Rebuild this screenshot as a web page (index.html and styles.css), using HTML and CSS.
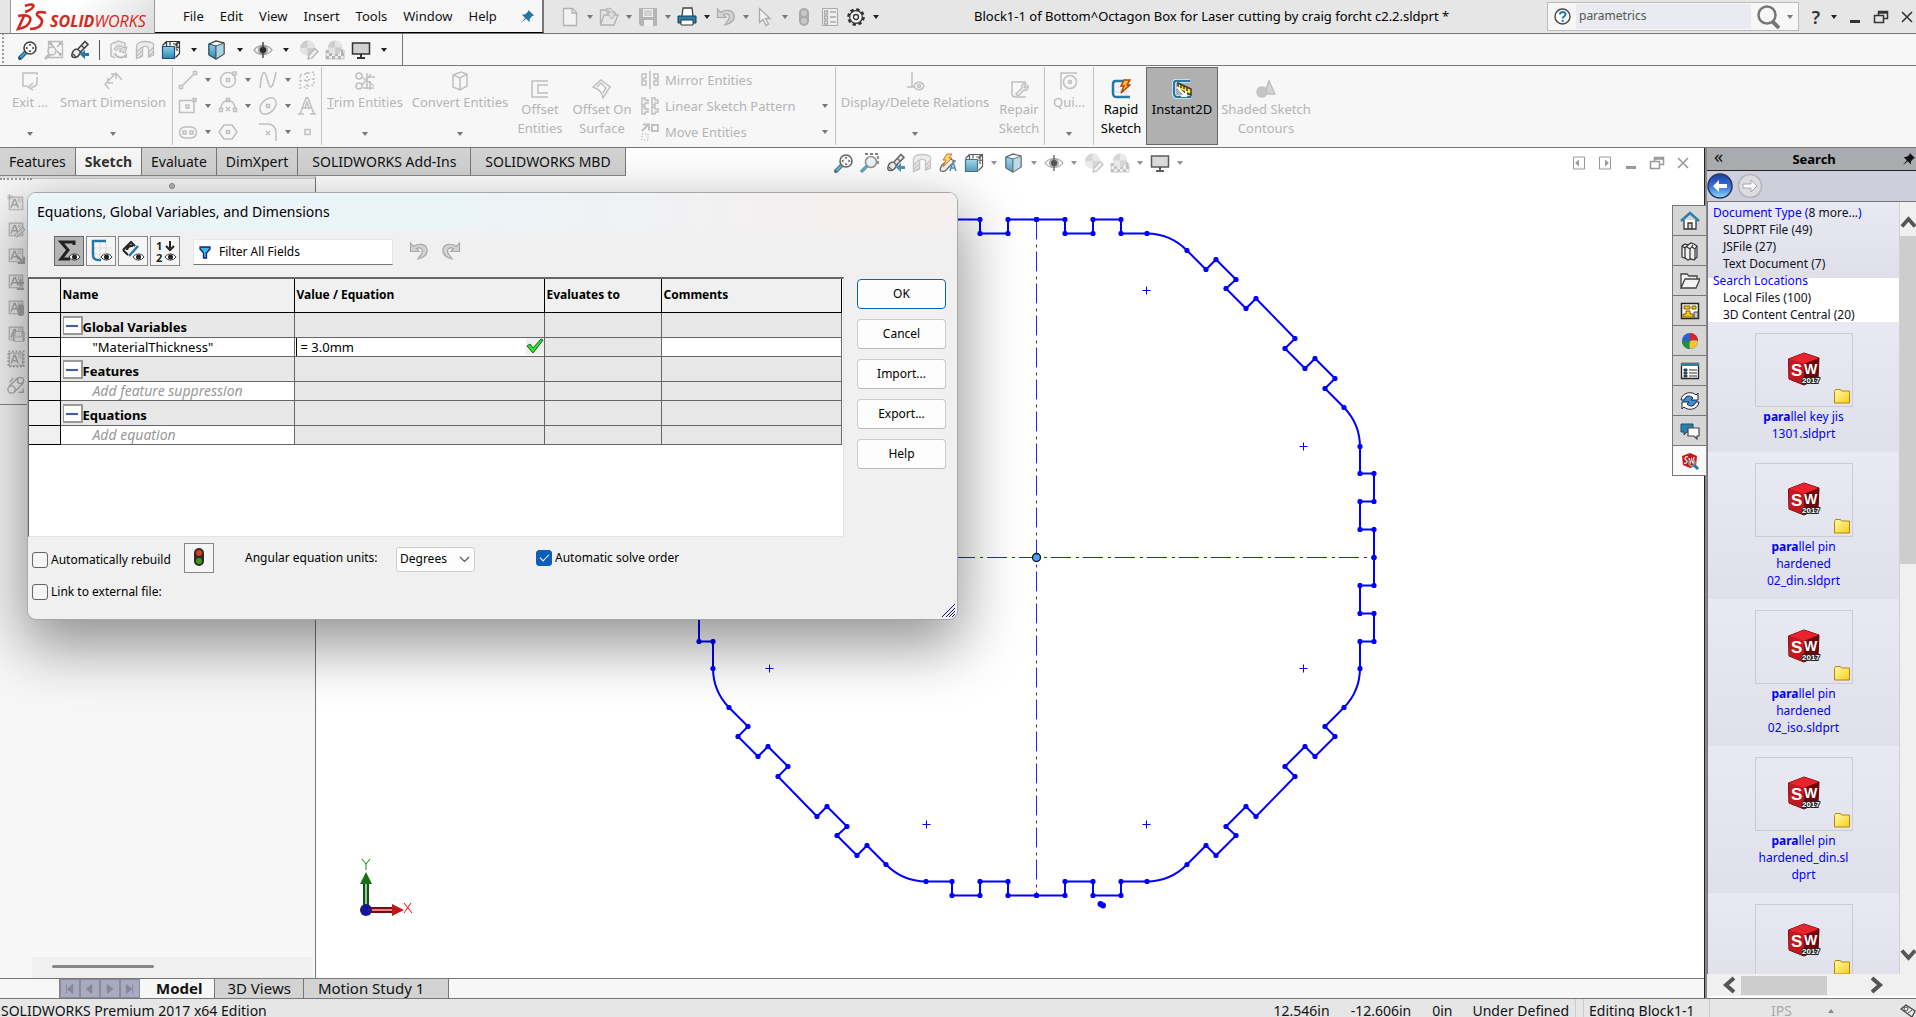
FILE: index.html
```html
<!DOCTYPE html>
<html lang="en">
<head>
<meta charset="utf-8">
<title>SOLIDWORKS - Equations, Global Variables, and Dimensions</title>
<link rel="stylesheet" href="styles.css">
</head>
<body>
<svg class="defs" aria-hidden="true">
  <defs>
    <linearGradient id="blueface" x1="0" y1="0" x2="0" y2="1"><stop offset="0" stop-color="#8fd0ea"/><stop offset="1" stop-color="#2f86b0"/></linearGradient>
    <linearGradient id="orb" x1="0" y1="0" x2="0" y2="1"><stop offset="0" stop-color="#1d3fa0"/><stop offset=".5" stop-color="#3a6fd8"/><stop offset="1" stop-color="#86dcff"/></linearGradient>
    <linearGradient id="fold" x1="0" y1="0" x2="1" y2="1"><stop offset="0" stop-color="#fffbb0"/><stop offset="1" stop-color="#f5cf12"/></linearGradient>
    <marker id="pt" markerUnits="userSpaceOnUse" markerWidth="6" markerHeight="6" refX="3" refY="3"><circle cx="3" cy="3" r="2.6" fill="#00f"/></marker>
  </defs>
  <symbol id="zoomfit" viewBox="0 0 20 20"><path d="M8 12 2 18" stroke="#16577c" stroke-width="4" stroke-linecap="round"/><path d="M7.500 12.500 2.500 17.500" stroke="#4aa3cc" stroke-width="2"/><circle cx="12" cy="8" r="6" fill="#fff" stroke="#444" stroke-width="1.600"/><path d="M12 3.500 13.500 5.500h-3zM12 12.500l1.500-2h-3zM7.500 8 9.500 6.500v3zM16.500 8l-2-1.500v3z" fill="#222"/></symbol>
  <symbol id="zoomarea" viewBox="0 0 20 20"><path d="M5 1h13v12" fill="none" stroke="#333" stroke-width="1.300" stroke-dasharray="3 2"/><path d="M7 13 2 18" stroke="#3f8fb8" stroke-width="3.500" stroke-linecap="round"/><circle cx="11" cy="9" r="5.500" fill="#e8f2f8" stroke="#777" stroke-width="1.500"/></symbol>
  <symbol id="zoomareag" viewBox="0 0 20 20"><path d="M4.500 1.500h14v16h-14z" fill="none" stroke="#bbb" stroke-width="1.300"/><path d="M15 3l2 0v2M17 3l-4 4M8 3H6v2M6 3l4 4M17 15v-2M17 15h-2M17 15l-4-4" fill="none" stroke="#b0b0b0" stroke-width="1.300"/><path d="M6 14 2 18" stroke="#bbb" stroke-width="3" stroke-linecap="round"/><circle cx="8" cy="11" r="4" fill="#f2f2f2" stroke="#bbb" stroke-width="1.500"/></symbol>
  <symbol id="prev" viewBox="0 0 20 20"><path d="M15 1.500 18 4.500 10.500 12c-1 3-3.500 5.500-6 5.500s-3-1.500-2.500-3.500c.5-3 3-5 6-5z" fill="#ececec" stroke="#444" stroke-width="1.600"/><path d="M7.500 9l4 4M11.500 5.500l3 3M3 14l3 3" stroke="#444" stroke-width="1.300"/><path d="M19 13v3h-4v3l-5-4.500 5-4.500v3z" fill="#1f78a8"/></symbol>
  <symbol id="rot" viewBox="0 0 20 20"><path d="M2 4 9 1l7 2v6M2 4v12l4 2" fill="#e9e9e9" stroke="#bbb" stroke-width="1.300"/><path d="M5 9c2-4 8-4 10-1l3-1-2 6-6-2 2.500-1.500C11 8 8 9 7.500 11z" fill="#dcdcdc" stroke="#b5b5b5"/><path d="M6 13c1 5 8 6 11 2v3" fill="none" stroke="#bbb" stroke-width="1.800"/></symbol>
  <symbol id="section" viewBox="0 0 20 20"><path d="M1.500 6c0-3 4-4.500 8.500-4.500S18.500 3 18.500 4v11l-5 2V8c-1-2-5-2-6-.5V16l-6 2.500z" fill="#ececec" stroke="#bbb" stroke-width="1.300"/><path d="M2 12l5-5M2 16l5-5M4 18l4-4M14 12l4-4M14 16l4-4" stroke="#bdbdbd" stroke-width="1.200"/></symbol>
  <symbol id="orient" viewBox="0 0 20 20"><path d="M5.500 1.500h13v12l-4 4M5.500 1.500l-4 4M18.500 1.500l-4 4M9 1.500v4M18.500 7l-4 1M5.500 2v4M12 4h4M16 2v9" fill="none" stroke="#333" stroke-width="1.200"/><path d="M1.500 6.500h12v12h-12z" fill="url(#blueface)" stroke="#1b4f6e" stroke-width="1.200"/></symbol>
  <symbol id="shade" viewBox="0 0 20 20"><path d="M2 4 9 1l8 2v11l-8 5-7-4z" fill="#f5f8fa" stroke="#333" stroke-width="1.200"/><path d="M2 4l7 2v13l-7-4z" fill="url(#blueface)" stroke="#1b4f6e"/><path d="M9 6l8-3v11l-8 5z" fill="#a9d4e6" stroke="#555"/></symbol>
  <symbol id="eye" viewBox="0 0 20 20"><path d="M1 10C5 4 15 4 19 10 15 16 5 16 1 10z" fill="#f2f2f2" stroke="#999" stroke-width="1.200"/><circle cx="10" cy="10" r="5" fill="#999"/><circle cx="10" cy="10" r="3" fill="#222"/><path d="M10 2v16" stroke="#333" stroke-width="1.300"/></symbol>
  <symbol id="ball" viewBox="0 0 20 20"><circle cx="8.500" cy="8" r="7.500" fill="#cdcdcd"/><path d="M8.500 .5a7.500 7.500 0 0 1 7.500 7.500h-7.500zM8.500 8v7.500A7.500 7.500 0 0 1 1 8z" fill="#e4e4e4"/><path d="M9 19l1-4 6-6.500 3 3L13 18z" fill="#f0f0f0" stroke="#b0b0b0" stroke-width="1.200"/></symbol>
  <symbol id="scene" viewBox="0 0 20 20"><path d="M1 10v9h18v-9" fill="#ededed" stroke="#c4c4c4"/><path d="M1 10h3v3H1zM4 13h3v3H4zM7 16h3v3H7zM13 16h3v3h-3zM10 13h3v3h-3zM16 13h3v3h-3zM1 16h3v3H1zM16 9h2v4h-2z" fill="#b5b5b5"/><circle cx="10" cy="7.500" r="7" fill="#cdcdcd"/><path d="M10 .5a7 7 0 0 1 7 7h-7zM10 7.500v7a7 7 0 0 1-7-7z" fill="#e4e4e4"/></symbol>
  <symbol id="monitor" viewBox="0 0 20 20"><path d="M1.500 3h17v11h-17z" fill="#cfd1d3" stroke="#333" stroke-width="1.500"/><path d="M10 14v4M6 18h8" stroke="#333" stroke-width="2"/></symbol>
  <symbol id="bolt" viewBox="0 0 20 20"><path d="M12 6l5 2-8 8c-1 2-4 3-6 2s0-4 1-6z" fill="#eee" stroke="#444" stroke-width="1.300"/><path d="M9 1h5l-3 4h3l-9 9 3-7H5z" fill="#ffd531" stroke="#c0501c"/><path d="M12 18l3-9 3 9M13 15h4" stroke="#2478a6" stroke-width="1.500" fill="none"/></symbol>
  <symbol id="min" viewBox="0 0 16 16"><path d="M3 11h10v3H3z" fill="currentColor"/></symbol>
  <symbol id="restore" viewBox="0 0 16 16"><path d="M5.500 6V2.500h9v7H11M1.500 6.500h9v7h-9zM5.500 4h9" fill="none" stroke="currentColor" stroke-width="1.500"/></symbol>
  <symbol id="close" viewBox="0 0 16 16"><path d="M3 3l10 10M13 3 3 13" stroke="currentColor" stroke-width="1.600"/></symbol>
  <symbol id="pin" viewBox="0 0 16 16"><path d="M9 1l6 6-2 .5-2.500 3L10 14 6.500 10.500 1 15l4.500-5.500L2 6l3.500-.5L8.500 3z" fill="currentColor"/></symbol>
  <symbol id="undo" viewBox="0 0 20 20"><path d="M1.500 2v8.500H10L7.500 7.500C12 5.500 15 9 12.500 12.500L9 18c7-2 10-5 9-10-1.500-5.500-9-6-13.500-2.500z" fill="#d2d2d2" stroke="#a9a9a9" stroke-width="1.200"/></symbol>
  <symbol id="miniEye" viewBox="0 0 12 10"><path d="M.5 5C3 1 9 1 11.500 5 9 9 3 9 .5 5z" fill="#fff" stroke="#333"/><circle cx="6" cy="5" r="2.500" fill="#222"/></symbol>
  <symbol id="abox" viewBox="0 0 20 20"><path d="M2.500 3.500h15v14h-15z" fill="#ececec" stroke="#b9b9b9" stroke-width="1.300"/><path d="M4.500 15 8 6h1l3.500 9M6 12h5" fill="none" stroke="#adadad" stroke-width="1.700"/><circle cx="14" cy="7" r="1.700" fill="none" stroke="#b5b5b5"/></symbol>
  <symbol id="part" viewBox="0 0 34 34"><path d="M1.500 7 17 1l15 5-1 20-14 7-15-6z" fill="#a80d14" stroke="#4d0508"/><path d="M1.500 7 17 1l15 5-15 6z" fill="#e8232b"/><path d="M17 12v21l-15-6-.5-20z" fill="#c4161d"/><path d="M17 12l15-6-1 20-14 7z" fill="#6d070b"/></symbol>
  <symbol id="folder" viewBox="0 0 16 16"><path d="M.5 3.500 1.500 1.500h5l1 1.500h8v12H.5z" fill="url(#fold)" stroke="#b8860b"/></symbol>
  <symbol id="quarter" overflow="visible"><path d="M0-338H28.500V-324H56.500V-338H84.500V-324H110.500A57 57 0 0 1 150.500-307L169.500-288 179.500-298 199.500-278 189.500-269 209.500-249 219.500-259 258.500-219 248.500-209 268.500-189 278.500-199 298.500-179 288.500-169 307.500-150A57 57 0 0 1 323.500-111V-84H337.500V-56H323.500V-28H337.500V0" fill="none" stroke="#00f" stroke-width="2" marker-start="url(#pt)" marker-mid="url(#pt)" marker-end="url(#pt)"/><path d="M106-267h8M110-271v8M263-111h8M267-115v8" stroke="#00f"/></symbol>
</svg>

<header class="titlebar">
  <div class="brand">
    <svg width="32" height="30" viewBox="0 0 32 30" fill="none" stroke="#d9261c" stroke-width="2.600"><path d="M10 4c6-3 10-1 8 1-1 2-5 4-8 5"/><path d="M3 14c8-2 14 0 12 5-1 4-6 7-12 8L9 14"/><path d="M31 11c-5-2-10-1-9 2 1 2 6 3 5 7-1 5-6 7-12 7"/></svg>
    <span class="brand-name"><b>SOLID</b>WORKS</span>
  </div>
  <nav class="menu">
    <button>File</button><button>Edit</button><button>View</button><button>Insert</button><button>Tools</button><button>Window</button><button>Help</button>
    <svg class="menu-pin" width="15" height="15"><use href="#pin"/></svg>
  </nav>
  <div class="quick">
    <button aria-label="New"><svg viewBox="0 0 20 20"><path d="M3.500 1.500h9l4 4v13h-13zM12 2v4h4" fill="#f3f3f3" stroke="#b2b2b2" stroke-width="1.300"/></svg></button><i class="caret"></i>
    <button aria-label="Open"><svg viewBox="0 0 20 20"><path d="M1.500 18V3h5l2 2h7v3M1.500 18 5 8h14l-4 10z" fill="#e6e6e6" stroke="#b2b2b2" stroke-width="1.300"/><path d="M7 2c4-2 7 0 7 4h3l-4 6-5-6h3c0-2-1-3-4-4z" fill="#ddd" stroke="#b5b5b5"/></svg></button><i class="caret"></i>
    <button aria-label="Save"><svg viewBox="0 0 20 20"><path d="M1 1h18v18H3l-2-2z" fill="#b4b4b4"/><path d="M5 2h10v8H5zM6 13h9v6H6z" fill="#eee"/><path d="M6 4h8M6 6h8M6 8h8" stroke="#b4b4b4"/></svg></button><i class="caret"></i>
    <button aria-label="Print"><svg viewBox="0 0 20 20"><path d="M5 9 6 1h9l1 8" fill="#fff" stroke="#444" stroke-width="1.300"/><path d="M1 9h18v7H1z" fill="#2b7fa9" stroke="#143c52"/><path d="M4 13h12v5H4z" fill="#fff" stroke="#333"/></svg></button><i class="caret dark"></i>
    <button aria-label="Undo"><svg><use href="#undo"/></svg></button><i class="caret"></i>
    <button aria-label="Select"><svg viewBox="0 0 20 20"><path d="M4.500 1.500v14l3.500-3 3 6 2.500-1.500-3-5.500H15z" fill="#f2f2f2" stroke="#aaa" stroke-width="1.300"/></svg></button><i class="caret"></i>
    <button aria-label="Rebuild"><svg viewBox="0 0 20 20"><rect x="5" y="1" width="10" height="18" rx="5" fill="#aaa"/><circle cx="10" cy="6" r="3" fill="#c8c8c8"/><circle cx="10" cy="14" r="3" fill="#c8c8c8"/></svg></button>
    <button class="spaced" aria-label="File properties"><svg viewBox="0 0 20 20"><path d="M2.500 1.500h15v17h-15z" fill="#eee" stroke="#aaa"/><path d="M4.500 4h3v3h-3zM4.500 9h3v3h-3zM4.500 14h3v3h-3zM10 5h6M10 10h6M10 15h6" fill="none" stroke="#aaa" stroke-width="1.300"/></svg></button>
    <button class="spaced" aria-label="Options"><svg viewBox="0 0 20 20"><circle cx="10" cy="10" r="7.500" fill="none" stroke="#333" stroke-width="2.600" stroke-dasharray="3.300 2.590"/><circle cx="10" cy="10" r="6.300" fill="#f4f4f4" stroke="#333" stroke-width="1.200"/><circle cx="10" cy="10" r="2.500" fill="none" stroke="#333" stroke-width="1.300"/></svg></button><i class="caret dark"></i>
  </div>
  <span class="doc-title">Block1-1 of Bottom^Octagon Box for Laser cutting by craig forcht c2.2.sldprt *</span>
  <div class="searchbox">
    <svg width="17" height="17" viewBox="0 0 17 17"><circle cx="8.500" cy="8.500" r="7.500" fill="#fff" stroke="#444" stroke-width="1.400"/><path d="M6 6.500c0-3.500 5.500-3.500 5.500 0 0 2-2.800 2-2.800 4M8.700 12v2" fill="none" stroke="#2478a6" stroke-width="2"/></svg>
    <input type="text" value="parametrics" aria-label="Search">
    <svg width="24" height="24" viewBox="0 0 24 24" fill="none" stroke="#777"><circle cx="11" cy="10" r="8.500" stroke-width="2.500"/><path d="M17 17l6 6" stroke-width="4"/></svg>
    <i class="caret"></i>
  </div>
  <div class="win-ctl">
    <button class="helpq">?</button><i class="caret dark"></i>
    <button aria-label="Minimize"><svg><use href="#min"/></svg></button>
    <button aria-label="Restore"><svg><use href="#restore"/></svg></button>
    <button aria-label="Close"><svg><use href="#close"/></svg></button>
  </div>
</header>

<div class="viewbar">
  <div class="viewtools">
    <button aria-label="Zoom to fit"><svg><use href="#zoomfit"/></svg></button>
    <button aria-label="Zoom to area"><svg><use href="#zoomareag"/></svg></button>
    <button class="rule" aria-label="Previous view"><svg><use href="#prev"/></svg></button>
    <button aria-label="Rotate view"><svg><use href="#rot"/></svg></button>
    <button aria-label="Section view"><svg><use href="#section"/></svg></button>
    <button aria-label="View orientation"><svg><use href="#orient"/></svg></button><i class="caret dark"></i>
    <button aria-label="Display style"><svg><use href="#shade"/></svg></button><i class="caret dark"></i>
    <button aria-label="Hide or show items"><svg><use href="#eye"/></svg></button><i class="caret dark"></i>
    <button aria-label="Edit appearance"><svg><use href="#ball"/></svg></button>
    <button aria-label="Apply scene"><svg><use href="#scene"/></svg></button>
    <button aria-label="View settings"><svg><use href="#monitor"/></svg></button><i class="caret dark"></i>
  </div>
</div>

<div class="ribbon">
  <div class="group g-sketch">
    <button class="tool w60"><svg viewBox="0 0 20 20"><path d="M17 4V2H3v13h4M17 6v5c0 3-2 5-6 5M13 12l-5 4 5 3" /></svg>Exit ...<i class="caret"></i></button>
    <button class="tool w106"><svg viewBox="0 0 20 20"><path d="M9 6 2 13l4 5M9 6l4-4 6 7M5 7v5h5M8 3h5v5"/></svg>Smart Dimension<i class="caret"></i></button>
  </div>
  <div class="group g-draw">
    <button aria-label="Line"><svg viewBox="0 0 20 20"><path d="M4 16 16 4M1.500 15.500h3v3h-3zM15.500 1.500h3v3h-3z"/></svg></button><i class="caret"></i>
    <button aria-label="Circle"><svg viewBox="0 0 20 20"><circle cx="10" cy="10" r="7.500"/><path d="M8.500 8.500h3v3h-3zM15 2h3v3h-3z"/></svg></button><i class="caret"></i>
    <button aria-label="Spline"><svg viewBox="0 0 20 20"><path d="M2 18C4 -2 7 0 9.500 10s5 11 8.500-8"/></svg></button><i class="caret"></i>
    <button aria-label="Plane"><svg viewBox="0 0 20 20"><path d="M3 5l14-3v13L3 18zM10 2v17M3 11l14-2" stroke-dasharray="2 2"/></svg></button>
    <button aria-label="Rectangle"><svg viewBox="0 0 20 20"><path d="M1.500 4.500H16v12H1.500zM8 9h3v3H8zM15 2.500h3v3h-3z"/></svg></button><i class="caret"></i>
    <button aria-label="Arc"><svg viewBox="0 0 20 20"><path d="M3 12c0-10 14-10 14 0M1.500 12.500h3v3h-3zM15.500 12.500h3v3h-3zM8.500 2.500h3v3h-3zM8 11l4 4M12 11l-4 4"/></svg></button><i class="caret"></i>
    <button aria-label="Ellipse"><svg viewBox="0 0 20 20"><ellipse cx="10" cy="10" rx="9.500" ry="6.500" transform="rotate(-45 10 10)"/><path d="M8.500 8.500h3v3h-3z"/></svg></button><i class="caret"></i>
    <button aria-label="Text"><svg viewBox="0 0 20 20"><path d="M1 18h6M13 18h6M3 18 9 2h2l6 16M6 12h8M8 12l2-6 2 6z"/></svg></button>
    <button aria-label="Slot"><svg viewBox="0 0 20 20"><rect x="1.500" y="5" width="17" height="11" rx="5.500"/><path d="M5 9h3v3H5zM12 9h3v3h-3z"/></svg></button><i class="caret"></i>
    <button aria-label="Polygon"><svg viewBox="0 0 20 20"><path d="M6 3h8l5 7-5 7H6l-5-7zM8.500 8.500h3v3h-3z"/></svg></button><i></i>
    <button aria-label="Fillet"><svg viewBox="0 0 20 20"><path d="M1 2h8c6 0 9 3 9 9v8M8 9l4 4M12 9l-4 4"/></svg></button><i class="caret"></i>
    <button aria-label="Point"><svg viewBox="0 0 20 20"><path d="M8 7.500h5v5H8z"/></svg></button>
  </div>
  <div class="group">
    <button class="tool w86"><svg viewBox="0 0 20 20"><circle cx="4" cy="5" r="3"/><circle cx="4" cy="15" r="3"/><path d="M7 6l12 9M7 14l9-11M12 2v16M8 17h11M15 10v9M13 6h7"/></svg><span><u>T</u>rim Entities</span><i class="caret"></i></button>
    <button class="tool w104"><svg viewBox="0 0 20 20"><path d="M3 4l8-3 6 2v12l-7 4-7-3zM3 4l7 3 7-4M10 7v12"/></svg>Convert Entities<i class="caret"></i></button>
    <button class="tool low w56"><svg viewBox="0 0 20 20"><path d="M18 2H2v16h16M18 6H8v8h10"/></svg><span>Offset<br>Entities</span></button>
    <button class="tool low w68"><svg viewBox="0 0 20 20"><path d="M1 8l8-7 9 7-7 11c0-5-5-9-10-11zM5 8l4-4 5 5-3 5"/></svg><span>Offset On<br>Surface</span></button>
    <div class="stack">
      <button><svg viewBox="0 0 20 20"><path d="M10 1v18M2 4h4v4H4v3h2v4H2zM18 4h-4v4h2v3h-2v4h4z"/></svg><span>Mirror Entities</span></button>
      <button><svg viewBox="0 0 20 20"><path d="M2 2h3v2h3v3H5v2H2zM12 2h3v2h3v3h-3v2h-3zM2 11h3v2h3v3H5v2H2zM12 11h3v2h3v3h-3v2h-3z"/></svg><span>Linear Sketch Pattern</span><i class="caret"></i></button>
      <button><svg viewBox="0 0 20 20"><path d="M2 9 8 3M3 2.500h6v6M12 3h6v6h-6z" stroke-width="2"/><path d="M2 12h6v6H2z" stroke-dasharray="1 2"/></svg><span>Move Entities</span><i class="caret"></i></button>
    </div>
  </div>
  <div class="group">
    <button class="tool w158"><svg viewBox="0 0 20 20"><path d="M7 1v15M2 16h7"/><path d="M9 15c2-5 8-5 10 0-2 5-8 5-10 0z"/><circle cx="14" cy="15" r="1.500"/></svg>Display/Delete Relations<i class="caret"></i></button>
    <button class="tool low w50"><svg viewBox="0 0 20 20"><path d="M17 3H3v12c0 2 1 3 4 3h10"/><path d="M7 15l6-6c-1-4 2-5 4-4l-2 3 1 1 3-2c0 4-2 5-4 4l-6 6z"/></svg><span>Repair<br>Sketch</span></button>
  </div>
  <div class="group">
    <button class="tool w48"><svg viewBox="0 0 20 20"><path d="M2 19V2h16"/><circle cx="11" cy="11" r="6.500"/><circle cx="11" cy="11" r="1.500"/></svg>Qui...<i class="caret"></i></button>
  </div>
  <div class="group g-last">
    <button class="tool low w50 on"><svg viewBox="0 0 20 20"><path d="M10 4v14M15 8v10M4 8h14M4 13h14" stroke="#ddd" stroke-width="1"/><path d="M15 2H5C3 2 2 3 2 5v9c0 3 1 4 4 4h13" stroke="#2478a6" stroke-width="2.500"/><path d="M13 1h6l-3 5h3l-9 8 3-7h-3z" fill="#ffc21e" stroke="#b5431a"/></svg><span>Rapid<br>Sketch</span></button>
    <button class="tool low w72 on active"><svg viewBox="0 0 20 20"><path d="M18 2H4C3 2 2 3 2 4v10c0 3 1 4 4 4h13" stroke="#fff" stroke-width="4"/><path d="M18 2H4C3 2 2 3 2 4v10c0 3 1 4 4 4h13" stroke="#2478a6" stroke-width="2.500"/><path d="M6 4l13 6v6L6 10z" fill="#ffe14a" stroke="#3a3a2a"/><path d="M9 6v3M12 7v3M15 9v3" stroke="#3a3a2a"/><path d="M5 8l9 9M14 12v5H9" stroke="#fff" stroke-width="2"/></svg><span>Instant2D</span></button>
    <button class="tool low w96"><svg viewBox="0 0 20 20"><path d="M13 2l6 13H8z" fill="#d4d4d4"/><circle cx="6" cy="13" r="5" fill="#c6c6c6"/></svg><span>Shaded Sketch<br>Contours</span></button>
  </div>
</div>

<div class="workspace">
  <main class="document">
    <div class="strip">
      <nav class="tabs">
        <button>Features</button><button class="current">Sketch</button><button>Evaluate</button><button>DimXpert</button><button class="wide">SOLIDWORKS Add-Ins</button><button class="wide">SOLIDWORKS MBD</button>
      </nav>
      <div class="hud">
        <button aria-label="Zoom to fit"><svg><use href="#zoomfit"/></svg></button>
        <button aria-label="Zoom to area"><svg><use href="#zoomarea"/></svg></button>
        <button aria-label="Previous view"><svg><use href="#prev"/></svg></button>
        <button aria-label="Section view"><svg><use href="#section"/></svg></button>
        <button aria-label="Dynamic annotation views"><svg><use href="#bolt"/></svg></button>
        <button aria-label="View orientation"><svg><use href="#orient"/></svg></button><i class="caret"></i>
        <button aria-label="Display style"><svg><use href="#shade"/></svg></button><i class="caret"></i>
        <button aria-label="Hide or show items"><svg><use href="#eye"/></svg></button><i class="caret"></i>
        <button aria-label="Edit appearance"><svg><use href="#ball"/></svg></button>
        <button aria-label="Apply scene"><svg><use href="#scene"/></svg></button><i class="caret"></i>
        <button aria-label="View settings"><svg><use href="#monitor"/></svg></button><i class="caret"></i>
      </div>
      <div class="doc-ctl">
        <button aria-label="Collapse left"><svg viewBox="0 0 16 16"><path d="M2.500 2v12h11V2z" fill="none" stroke="currentColor"/><path d="M8 4.500v7L4 8z" fill="currentColor"/></svg></button>
        <button aria-label="Collapse right"><svg viewBox="0 0 16 16"><path d="M2.500 2v12h11V2z" fill="none" stroke="currentColor"/><path d="M8 4.500v7L12 8z" fill="currentColor"/></svg></button>
        <button aria-label="Minimize"><svg><use href="#min"/></svg></button>
        <button aria-label="Restore"><svg><use href="#restore"/></svg></button>
        <button aria-label="Close"><svg><use href="#close"/></svg></button>
      </div>
    </div>
    <div class="stage">
      <aside class="tree">
        <div class="block-tools">
          <svg viewBox="0 0 20 20"><use href="#abox"/><path d="M3 0v7M0 3.500h7M1 1l5 5M6 1 1 6" stroke="#b5b5b5"/></svg>
          <svg viewBox="0 0 20 20"><use href="#abox"/><path d="M8 17 18 8l2 3-9 8z" fill="#ddd" stroke="#a8a8a8"/></svg>
          <svg viewBox="0 0 20 20"><use href="#abox"/><path d="M11 11l7 7M19 12v7h-7" stroke="#a8a8a8" stroke-width="2.500" fill="none"/></svg>
          <svg viewBox="0 0 20 20"><use href="#abox"/><path d="M15 8v8M11 12h8M11 19h8" stroke="#aaa" stroke-width="2.500"/></svg>
          <svg viewBox="0 0 20 20"><use href="#abox"/><rect x="12" y="7" width="7" height="13" rx="3" fill="#a8a8a8"/></svg>
          <svg viewBox="0 0 20 20"><use href="#abox"/><path d="M7 9h12v10H7z" fill="#ccc" stroke="#a8a8a8"/><path d="M10 9h6v4h-6zM9 15h8v4H9z" fill="#eee"/></svg>
          <svg viewBox="0 0 20 20"><use href="#abox"/><path d="M1.500 1.500h17v17h-17z" fill="none" stroke="#aaa" stroke-width="2" stroke-dasharray="2 2"/></svg>
          <svg viewBox="0 0 20 20" fill="none" stroke="#b0b0b0" stroke-width="1.500"><circle cx="5" cy="15" r="4"/><circle cx="15" cy="5" r="3.500"/><path d="M2 12 12 2M8 18l10-10M3 7l4-5M13 18h5v-4"/></svg>
        </div>
        <div class="tree-view"><i class="knob"></i><div class="hbar"><i></i></div></div>
      </aside>
      <section class="canvas">
        <svg class="sketch" viewBox="316 176 1388 802">
          <path d="M1036.500 219.500V895.500M699 557.500H1374" stroke="#2222f0" stroke-dasharray="20 5 3 4" fill="none"/>
          <use href="#quarter" transform="translate(1036.500 557.500)"/>
          <use href="#quarter" transform="translate(1036.500 557.500) scale(-1 1)"/>
          <use href="#quarter" transform="translate(1036.500 557.500) scale(1 -1)"/>
          <use href="#quarter" transform="translate(1036.500 557.500) scale(-1 -1)"/>
          <circle cx="1036.500" cy="557.500" r="4" fill="#4da3ff" stroke="#111" stroke-width="1.300"/>
          <circle cx="1100.500" cy="904" r="3" fill="#00f"/><circle cx="1103" cy="905.500" r="3" fill="#00f"/>
          <path d="M366 908v-26" stroke="#14501a" stroke-width="6"/><path d="M366 908v-26" stroke="#8fce8f" stroke-width="2"/><path d="M366 872l6 12h-12z" fill="#1a6e1a"/>
          <path d="M368 910h25" stroke="#701010" stroke-width="6"/><path d="M368 910h25" stroke="#f08080" stroke-width="2"/><path d="M404 910l-12-6v12z" fill="#c01818"/>
          <circle cx="366" cy="910" r="6" fill="#1a1a80"/><path d="M364 907h4l-4 6h4" fill="none" stroke="#00f"/>
          <path d="M362 859l4 5 4-5M366 864v6" fill="none" stroke="#080"/><path d="M404 903l8 10M411 903l-7 10" fill="none" stroke="#f00"/>
        </svg>
      </section>
    </div>
    <nav class="sheets">
      <div class="pager">
        <button aria-label="First"><svg viewBox="0 0 20 20"><path d="M6 5v10M13 5v10L7 10z"/></svg></button>
        <button aria-label="Previous"><svg viewBox="0 0 20 20"><path d="M12 5v10L6 10z"/></svg></button>
        <button aria-label="Next"><svg viewBox="0 0 20 20"><path d="M7 5v10l6-5z"/></svg></button>
        <button aria-label="Last"><svg viewBox="0 0 20 20"><path d="M13 5v10M6 5v10l6-5z"/></svg></button>
      </div>
      <button class="current">Model</button><button>3D Views</button><button class="wide">Motion Study 1</button>
    </nav>
    <nav class="side-tabs">
      <button aria-label="Resources"><svg viewBox="0 0 20 20"><path d="M4 9v9h12V9M8 18v-6h4v6" fill="#fff" stroke="#333" stroke-width="1.300"/><path d="M1 10 10 2l9 8" fill="none" stroke="#2b7fa9" stroke-width="2.500"/></svg></button>
      <button aria-label="Design library"><svg viewBox="0 0 20 20"><path d="M2 5l3-2 3 1 3-2 3 1 3 2v11l-3 3-3-1-3 1-3-2-3-1z" fill="#eee" stroke="#333" stroke-width="1.200"/><path d="M2 5l3 2v11M5 7l3-3M7 6l3 2v10M10 8l3-4M12 6l3 2v10M15 8l2-3" fill="none" stroke="#333" stroke-width="1.200"/></svg></button>
      <button aria-label="File explorer"><svg viewBox="0 0 20 20"><path d="M1 17V3h6l2 2h8v3M1 17l4-9h15l-4 9z" fill="#f4f4f4" stroke="#444" stroke-width="1.300"/></svg></button>
      <button aria-label="View palette"><svg viewBox="0 0 20 20"><path d="M1.500 2.500h17v15h-17z" fill="#fff" stroke="#222" stroke-width="1.500"/><path d="M4 5h6v3H4zM12 5h4v3h-4zM6 10h4v3h3v3H3v-3h3z" fill="#ffc90e" stroke="#7a5a00"/><path d="M14 11h4v6h-4z" fill="#ccc" stroke="#444"/></svg></button>
      <button aria-label="Appearances"><svg viewBox="0 0 20 20"><circle cx="10" cy="10" r="8" fill="#2a62c8"/><path d="M10 2a8 8 0 0 1 8 8c-3-1-5-1-8 0z" fill="#d8232a"/><path d="M18 10a8 8 0 0 1-8 8c-1-3-1-5 0-8 3-1 5-1 8 0z" fill="#f2c531"/><path d="M10 18a8 8 0 0 1-8-8c3 1 5 1 8 0-1 3-1 5 0 8z" fill="#24903a"/></svg></button>
      <button aria-label="Custom properties"><svg viewBox="0 0 20 20"><path d="M1.500 2.500h17v15h-17z" fill="#fff" stroke="#222" stroke-width="1.300"/><path d="M1 2h18v3H1z" fill="#2b7fa9"/><path d="M4 8h3v2H4zM4 11h3v2H4zM4 14h3v2H4z" fill="#2b7fa9" stroke="#222" stroke-width=".8"/><path d="M9 9h8M9 12h8M9 15h8" stroke="#333"/></svg></button>
      <button aria-label="Recovery"><svg viewBox="0 0 20 20"><circle cx="10" cy="10" r="7.500" fill="#3a8fd8"/><path d="M1 9c1-8 11-9 15-5l2-2v7h-7l2-2C10 4 6 4 4 9zM19 11c-1 8-11 9-15 5l-2 2v-7h7l-2 2c3 3 7 3 9-2z" fill="#fff" stroke="#223" stroke-width="1"/></svg></button>
      <button aria-label="Forum"><svg viewBox="0 0 20 20"><path d="M1 3h12v8H7l-3 3v-3H1z" fill="#2b7fa9" stroke="#1b4f6e"/><path d="M8 7h11v8h-2v3l-3-3H8z" fill="#fff" stroke="#444" stroke-width="1.200"/></svg></button>
      <button class="current" aria-label="Search"><svg viewBox="0 0 20 20"><path d="M2 5l8-3 7 3-1 10-6 2-7-3z" fill="#c4161d"/><path d="M8 6c-3-1-4 2-2 3s1 4-2 3M9 7l1 5 1.500-4L13 12l1-6" fill="none" stroke="#fff" stroke-width="1.200"/><circle cx="12" cy="12" r="3" fill="none" stroke="#999" stroke-width="1.500"/><path d="M14 14l4 4" stroke="#2478a6" stroke-width="3"/></svg></button>
    </nav>
  </main>

  <aside class="panel">
    <header class="panel-head"><span>«</span><h2>Search</h2><svg width="14" height="16"><use href="#pin"/></svg></header>
    <div class="panel-nav">
      <button aria-label="Back"><svg viewBox="0 0 26 26"><circle cx="13" cy="13" r="12" fill="url(#orb)" stroke="#27345f" stroke-width="1.500"/><path d="M6 13l6-6v4h8v4h-8v4z" fill="#fff"/></svg></button>
      <button aria-label="Forward"><svg viewBox="0 0 26 26"><circle cx="13" cy="13" r="11.500" fill="#dcdce0" stroke="#b4b4b8" stroke-width="1.500"/><path d="M20 13l-6-6v4H6v4h8v4z" fill="#fff" stroke="#a5a5a8"/></svg></button>
    </div>
    <div class="panel-body">
      <div class="results">
        <div class="facet"><a href="#">Document Type (<span>8 more...</span>)</a><ul><li>SLDPRT File (49)</li><li>JSFile (27)</li><li>Text Document (7)</li></ul></div>
        <div class="facet white"><a href="#">Search Locations</a><ul><li>Local Files (100)</li><li>3D Content Central (20)</li></ul></div>
        <a class="item" href="#"><span class="thumb"><svg class="cube" viewBox="0 0 34 34"><use href="#part"/><text class="s" x="4" y="24">S</text><text class="w" x="17" y="22">W</text><text class="yr" x="15" y="31">2017</text></svg><svg class="fold"><use href="#folder"/></svg></span><b>para</b>llel key jis<br>1301.sldprt</a>
        <a class="item" href="#"><span class="thumb"><svg class="cube" viewBox="0 0 34 34"><use href="#part"/><text class="s" x="4" y="24">S</text><text class="w" x="17" y="22">W</text><text class="yr" x="15" y="31">2017</text></svg><svg class="fold"><use href="#folder"/></svg></span><b>para</b>llel pin<br>hardened<br>02_din.sldprt</a>
        <a class="item" href="#"><span class="thumb"><svg class="cube" viewBox="0 0 34 34"><use href="#part"/><text class="s" x="4" y="24">S</text><text class="w" x="17" y="22">W</text><text class="yr" x="15" y="31">2017</text></svg><svg class="fold"><use href="#folder"/></svg></span><b>para</b>llel pin<br>hardened<br>02_iso.sldprt</a>
        <a class="item" href="#"><span class="thumb"><svg class="cube" viewBox="0 0 34 34"><use href="#part"/><text class="s" x="4" y="24">S</text><text class="w" x="17" y="22">W</text><text class="yr" x="15" y="31">2017</text></svg><svg class="fold"><use href="#folder"/></svg></span><b>para</b>llel pin<br>hardened_din.sl<br>dprt</a>
        <a class="item" href="#"><span class="thumb"><svg class="cube" viewBox="0 0 34 34"><use href="#part"/><text class="s" x="4" y="24">S</text><text class="w" x="17" y="22">W</text><text class="yr" x="15" y="31">2017</text></svg><svg class="fold"><use href="#folder"/></svg></span></a>
      </div>
      <div class="vscroll"><svg viewBox="0 0 17 34"><path d="M2 25l7-8 7 8" fill="none" stroke="#555" stroke-width="4"/></svg><i></i><svg viewBox="0 0 17 34"><path d="M2 10l7 8 7-8" fill="none" stroke="#555" stroke-width="4"/></svg></div>
    </div>
    <div class="hscroll"><svg viewBox="0 0 34 20"><path d="M27 3l-8 7 8 7" fill="none" stroke="#555" stroke-width="4"/></svg><i></i><svg viewBox="0 0 34 20"><path d="M11 3l8 7-8 7" fill="none" stroke="#555" stroke-width="4"/></svg></div>
  </aside>

  <section class="dialog" role="dialog" aria-labelledby="dlg-title">
    <h1 id="dlg-title">Equations, Global Variables, and Dimensions</h1>
    <div class="dlg-tools">
      <button class="pressed" aria-label="Equation view"><svg viewBox="0 0 26 26"><path d="M18 7V4H5l7 8-7 9h9" fill="none" stroke="#222" stroke-width="3"/><use href="#miniEye" x="12" y="14" width="13" height="10"/></svg></button>
      <button aria-label="Sketch equation view"><svg viewBox="0 0 26 26"><path d="M12 3v20M18 3v20M4 10h20M4 16h20" stroke="#ddd"/><path d="M18 3H5v14c0 3 2 5 5 5h3" fill="none" stroke="#2478a6" stroke-width="2.500"/><use href="#miniEye" x="12" y="14" width="13" height="10"/></svg></button>
      <button aria-label="Dimension view"><svg viewBox="0 0 26 26"><path d="M3 12 11 4l4 4M3 12l5 5" fill="none" stroke="#222" stroke-width="2"/><path d="M7 12c0-3 3-5 6-4" fill="none" stroke="#222" stroke-width="2.500"/><path d="M9 18l9-10" stroke="#2478a6" stroke-width="2.500"/><use href="#miniEye" x="12" y="14" width="13" height="10"/></svg></button>
      <button aria-label="Ordered view"><svg viewBox="0 0 26 26"><text x="4" y="12" class="num">1</text><text x="4" y="24" class="num">2</text><path d="M18 3v7M14 8l4 4 4-4" fill="none" stroke="#222" stroke-width="2"/><use href="#miniEye" x="12" y="14" width="13" height="10"/></svg></button>
      <label class="filter"><svg width="12" height="13" viewBox="0 0 12 13"><path d="M1 1h10v2L7.500 7v5h-3V7L1 3z" fill="#38b4e0" stroke="#16227a" stroke-width="1.300"/></svg><input type="text" value="Filter All Fields" aria-label="Filter"></label>
      <button class="plain" aria-label="Undo"><svg><use href="#undo"/></svg></button>
      <button class="plain flip" aria-label="Redo"><svg><use href="#undo"/></svg></button>
    </div>
    <div class="dlg-main">
      <div class="gridbox">
        <table>
          <colgroup><col class="c0"><col class="c1"><col class="c2"><col class="c3"><col class="c4"></colgroup>
          <thead><tr><th></th><th>Name</th><th>Value / Equation</th><th>Evaluates to</th><th>Comments</th></tr></thead>
          <tbody>
            <tr class="sec"><td></td><td><div class="sec-name"><button class="fold-btn" aria-label="Collapse"></button>Global Variables</div></td><td></td><td></td><td></td></tr>
            <tr><td></td><td class="open">"MaterialThickness"</td><td class="open edit"><div class="cell"><span>= 3.0mm</span><svg width="18" height="17" viewBox="0 0 18 17"><path d="M1 8l3-2 3 4 8-9 2 1L7 15z" fill="#2fe02f" stroke="#0a6b0a"/></svg></div></td><td></td><td class="open"></td></tr>
            <tr class="sec"><td></td><td><div class="sec-name"><button class="fold-btn" aria-label="Collapse"></button>Features</div></td><td></td><td></td><td></td></tr>
            <tr><td></td><td class="open hint">Add feature suppression</td><td></td><td></td><td></td></tr>
            <tr class="sec"><td></td><td><div class="sec-name"><button class="fold-btn" aria-label="Collapse"></button>Equations</div></td><td></td><td></td><td></td></tr>
            <tr><td></td><td class="open hint">Add equation</td><td></td><td></td><td></td></tr>
          </tbody>
        </table>
      </div>
      <div class="dlg-buttons"><button class="default">OK</button><button>Cancel</button><button>Import...</button><button>Export...</button><button>Help</button></div>
    </div>
    <div class="dlg-opts">
      <label class="check rebuild"><input type="checkbox">Automatically rebuild</label>
      <button class="light" aria-label="Rebuild"><svg viewBox="0 0 12 20"><rect x="1" y="1" width="10" height="18" rx="5" fill="#2c2c2c"/><circle cx="6" cy="6" r="3" fill="#e03a18"/><circle cx="6" cy="14" r="3" fill="#3f9a1f"/></svg></button>
      <label class="units" for="units">Angular equation units:</label>
      <span class="picker"><select id="units"><option>Degrees</option><option>Radians</option></select><svg width="11" height="7" viewBox="0 0 11 7"><path d="M1 1l4.500 4.500L10 1" fill="none" stroke="#555" stroke-width="1.200"/></svg></span>
      <label class="check solve"><input type="checkbox" checked>Automatic solve order</label>
    </div>
    <label class="check link"><input type="checkbox">Link to external file:</label>
    <svg class="grip" width="15" height="15" viewBox="0 0 15 15"><path d="M1 14 14 1M5 14l9-9M8 14l6-6M11 14l3-3" stroke="#11117a"/></svg>
  </section>
</div>

<footer class="status">
  <span class="edition">SOLIDWORKS Premium 2017 x64 Edition</span>
  <span class="coord">12.546in</span><span class="coord">-12.606in</span><span class="coord">0in</span><span class="state">Under Defined</span><span class="editing">Editing Block1-1</span>
  <span class="ips">IPS <i></i></span>
  <svg width="16" height="16" viewBox="0 0 16 16"><path d="M1 6l5-4 9 6-3 6z" fill="#eee" stroke="#444" stroke-width="1.300"/><circle cx="6" cy="6" r="2" fill="none" stroke="#444"/><path d="M8 10l4-3" stroke="#444"/></svg>
</footer>
</body>
</html>
```
FILE: styles.css
```css
* { box-sizing: border-box; }
body {
  margin: 0; height: 100vh; min-width: 1400px; overflow: hidden;
  display: flex; flex-direction: column;
  font: 13px/20px "Noto Sans", "Open Sans", sans-serif; color: #111; background: #f7f7f7;
}
button { font: inherit; color: inherit; background: none; border: 0; padding: 0; margin: 0; }
input, select { font: inherit; color: inherit; }
a { text-decoration: none; color: #00f; }
svg { display: block; flex: none; }
.defs { position: absolute; width: 0; height: 0; }
.caret { flex: none; width: 20px; height: 8px; display: flex; justify-content: center; align-items: center; }
.caret::after { content: ""; border: 3px solid transparent; border-top: 4px solid #777; border-bottom: 0; }
.caret.dark::after { border-top-color: #222; }

/* title bar */
.titlebar { flex: none; display: flex; height: 34px; background: #e6e6e6; border-bottom: 1px solid #777; }
.brand { width: 145px; margin-left: 10px; display: flex; align-items: center; gap: 3px; padding-left: 4px; background: linear-gradient(135deg, #fff 40%, #dcdcdc); border: 1px solid #999; border-width: 0 1px; }
.brand-name { font: italic 16px/20px "Open Sans", sans-serif; color: #d9261c; padding-top: 8px; }
.menu { width: 389px; display: flex; align-items: center; gap: 16px; padding-left: 28px; background: #f7f7f7; border-bottom: 1px solid #000; border-right: 2px solid #777; }
.menu-pin { margin-left: 7px; color: #2478a6; }
.quick { display: flex; align-items: center; padding-left: 16px; }
.quick button, .viewbar button, .hud button { width: 20px; height: 20px; }
.quick .caret { width: 19px; }
.quick svg, .viewbar svg, .hud svg { width: 20px; height: 20px; }
.quick .spaced { margin-left: 6px; }
.doc-title { margin-left: 89px; line-height: 33px; white-space: nowrap; color: #000; }
.searchbox { margin: 2px 0 2px auto; width: 252px; display: flex; align-items: center; gap: 5px; padding: 1px 3px 1px 6px; border: 1px solid #bbb; background: #f7f7f7; }
.searchbox input { flex: 1; min-width: 0; height: 25px; border: 0; padding: 0 3px 3px; background: #e9ebf0; font-size: 12px; color: #555; }
.searchbox .caret { width: 10px; }
.win-ctl { display: flex; align-items: center; gap: 10px; padding: 0 1px 0 12px; color: #333; }
.win-ctl button, .doc-ctl button { width: 16px; height: 16px; }
.win-ctl svg, .doc-ctl svg { width: 16px; height: 16px; }
.win-ctl .caret { width: 6px; }
.win-ctl .helpq { width: 10px; font-size: 18px; font-weight: 600; line-height: 16px; color: #333; }

/* view toolbar */
.viewbar { flex: none; height: 32px; display: flex; border-bottom: 1px solid #777; background: #f7f7f7; }
.viewtools { width: 403px; display: flex; align-items: center; gap: 6px; padding-left: 18px; border-right: 1px solid #777; background: radial-gradient(circle at 1px 1px, #999 1px, transparent 1px) 2px 3px / 400px 4px repeat-y; }
.viewbar .rule { width: 30px; margin-right: 3px; border-right: 1px solid #555; }
.viewbar .caret { width: 14px; }

/* ribbon */
.ribbon { flex: none; height: 82px; display: flex; padding: 1px 0 2px; border-bottom: 1px solid #777; color: #b4b4b4; background: #f7f7f7; }
.ribbon svg { width: 20px; height: 20px; fill: none; stroke: #c0c0c0; stroke-width: 1.500px; }
.group { display: flex; border-right: 1px solid #c4c4c4; }
.g-last { border: 0; padding-left: 2px; }
.g-sketch { width: 173px; }
.g-draw { display: grid; grid-template: repeat(3, 26px) / 30px 10px 30px 10px 30px 10px 28px; place-items: center; }
.g-draw .caret { width: 10px; }
.tool { display: flex; flex-direction: column; align-items: center; justify-content: flex-start; padding-top: 4px; white-space: nowrap; text-align: center; gap: 1px; }
.tool .caret { margin-top: 17px; }
.tool.low { padding-top: 12px; line-height: 19px; }
.tool.on { color: #000; }
.tool.active { background: #b0b0b0; border: 1px solid #666; padding-top: 11px; }
.w48 { width: 48px; } .w50 { width: 50px; } .w56 { width: 56px; } .w60 { width: 60px; } .w68 { width: 68px; } .w72 { width: 72px; }
.w86 { width: 86px; } .w96 { width: 96px; } .w104 { width: 104px; } .w106 { width: 106px; } .w158 { width: 158px; }
.stack { width: 199px; padding-left: 4px; }
.stack button { display: flex; width: 100%; height: 26px; align-items: center; gap: 5px; }
.stack .caret { margin-left: auto; }

/* document area */
.workspace { flex: 1; min-height: 0; display: flex; position: relative; }
.document { flex: 1; min-width: 0; display: flex; flex-direction: column; position: relative; background: #fff; border-right: 1px solid #222; }
.strip { height: 28px; flex: none; display: flex; }
.tabs { display: flex; border-bottom: 1px solid #888; }
.tabs button { padding: 0 9px; font-size: 14px; background: #d3d3d3; border-right: 1px solid #777; }
.tabs .wide { padding: 0 14px; }
.tabs .current { background: #f7f7f7; font-weight: bold; color: #333; }
.hud { display: flex; align-items: center; gap: 6px; margin-left: 208px; padding-top: 2px; opacity: .8; }
.hud .caret { width: 8px; }
.doc-ctl { display: flex; align-items: center; gap: 10px; margin: 0 13px 0 auto; padding-top: 2px; color: #999; }
.stage { flex: 1; min-height: 0; display: flex; }
.tree { width: 316px; display: flex; background: #f7f7f7; border-right: 1px solid #777; border-top: 2px solid #ddd; }
.block-tools { width: 32px; height: 227px; padding: 14px 7px 0; display: flex; flex-direction: column; gap: 8px; border-bottom: 1px solid #888; border-top: 2px dotted #999; }
.block-tools svg { width: 18px; height: 18px; }
.tree-view { flex: 1; display: flex; flex-direction: column; justify-content: space-between; padding-right: 2px; border-top: 1px solid #ccc; }
.knob { width: 6px; height: 6px; margin: 4px 0 0 137px; border-radius: 50%; background: #bbb; border: 1px solid #888; }
.hbar { height: 21px; padding: 8px 20px; background: #f0f0f0; }
.hbar i { display: block; width: 102px; height: 3px; border-radius: 2px; background: #888; }
.canvas { flex: 1; min-width: 0; }
.sketch { width: 100%; height: 100%; }
.sheets { flex: none; height: 20px; display: flex; padding-left: 33px; background: #f7f7f7; border-top: 1px solid #777; font-size: 15px; }
.sheets > button { padding: 0 12px; line-height: 19px; background: #d3d3d3; border-right: 1px solid #777; white-space: nowrap; }
.sheets > .current { padding: 0 12px 0 16px; background: #f7f7f7; font-weight: bold; }
.sheets > .wide { padding: 0 24px 0 14px; }
.pager { display: flex; margin-left: 26px; background: #a9a9c0; border-left: 1px solid #888; }
.pager button { width: 20px; border: 1px solid #8b8ba0; }
.pager svg { width: 18px; height: 18px; fill: #85859c; stroke: #85859c; }
.side-tabs { position: absolute; right: -2px; top: 57px; width: 34px; background: #d6d6d6; border: 1px solid #777; border-right: 0; z-index: 2; }
.side-tabs button { display: flex; width: 100%; height: 30px; align-items: center; justify-content: center; border-bottom: 1px solid #777; }
.side-tabs button:last-child { height: 29px; border: 0; }
.side-tabs .current { background: #f9f9f9; }
.side-tabs svg { width: 20px; height: 20px; }

/* task pane */
.panel { flex: none; width: 211px; display: flex; flex-direction: column; border-left: 2px solid #888; background: #cfcfdc; }
.panel-head { height: 23px; display: flex; align-items: center; padding: 0 0 0 7px; background: #a9abaf; border-bottom: 1px solid #222; }
.panel-head h2 { flex: 1; margin: 0; padding-left: 3px; font-size: 13px; text-align: center; color: #000; }
.panel-head span { font-size: 18px; line-height: 16px; padding-bottom: 6px; }
.panel-nav { height: 31px; display: flex; align-items: center; gap: 4px; border-bottom: 1px solid #777; }
.panel-nav svg { width: 26px; height: 26px; }
.panel-body { flex: 1; min-height: 0; display: flex; border-left: 1px solid #777; }
.results { flex: 1; min-width: 0; overflow: hidden; font-size: 12px; line-height: 17px; background: #e2e3ec; border-right: 1px solid #d0d0d8; }
.facet { height: 70px; padding: 2px 0 0 5px; background: linear-gradient(#e8e9f2, #dfe0ea); }
.facet span, .facet ul { color: #112; }
.facet.white { height: 50px; padding: 0 0 0 5px; background: linear-gradient(#dfe0ea 6px, #fff 6px); }
.facet ul { list-style: none; margin: 0; padding: 0 0 0 10px; }
.item { display: block; padding: 11px 0 10px; text-align: center; background: linear-gradient(#e8e9f2, #dfe0ea); }
.thumb { width: 98px; height: 74px; margin: 0 auto 1px; border: 1px solid #cbcbd6; display: grid; grid-template: 1fr / 31px 34px 1fr; }
.cube { grid-column: 2; width: 34px; height: 34px; margin-top: 18px; font: bold 17px "Liberation Sans", sans-serif; fill: #fff; overflow: visible; }
.cube .w { font-size: 14px; }
.cube .yr { font-size: 8px; stroke: #222; stroke-width: 2px; paint-order: stroke; }
.fold { width: 16px; height: 16px; align-self: end; justify-self: end; margin: 0 2px 2px 0; }
.vscroll { width: 16px; display: flex; flex-direction: column; background: #f0f0f0; }
.vscroll svg { width: 16px; height: 34px; }
.vscroll i { height: 328px; background: #cdcdcd; margin-bottom: auto; }
.hscroll { flex: none; height: 24px; display: flex; align-items: center; background: #f0f0f0; border-bottom: 2px solid #fff; }
.hscroll svg { width: 34px; height: 20px; }
.hscroll i { width: 86px; height: 19px; background: #cdcdcd; margin-right: 34px; }

/* equations dialog */
.dialog {
  position: absolute; left: 27px; top: 44px; width: 931px; z-index: 5; overflow: hidden;
  background: #f0f0f0; border: 1px solid #a8a8a8; border-radius: 9px; font-size: 12px; color: #000;
  box-shadow: 0 22px 60px 4px rgba(0, 0, 0, .42);
}
.dialog h1 { margin: 0; height: 38px; padding-left: 9px; font-size: 14px; line-height: 38px; font-weight: normal; background: linear-gradient(90deg, #ebf4f8 45%, #f6efef 90%); }
.dlg-tools { display: flex; gap: 2px; padding: 5px 26px 11px; align-items: center; }
.dlg-tools > button { width: 30px; height: 30px; padding: 1px; border: 1px solid #888; background: #f5f5f5; }
.dlg-tools > button svg { width: 26px; height: 26px; }
.dlg-tools > button.pressed { background: #b4b4b4; border-color: #666; }
.dlg-tools > .plain { border: 0; background: none; padding: 5px; }
.dlg-tools > .plain svg { width: 20px; height: 20px; }
.dlg-tools > .flip svg { transform: scaleX(-1); }
.num { font: bold 11px "Open Sans", sans-serif; fill: #222; }
.filter { width: 200px; height: 26px; margin: 2px 9px 0 11px; display: flex; align-items: center; gap: 8px; padding-left: 5px; background: #fff; border: 1px solid #e6e6e6; border-bottom-color: #777; }
.filter input { border: 0; outline: 0; padding: 0; width: 160px; background: none; }
.dlg-main { display: flex; gap: 13px; }
.gridbox { width: 816px; height: 260px; background: #fff; border: 1px solid #666; border-top-width: 2px; border-right-color: #e4e4e4; border-bottom-color: #e4e4e4; }
table { border-collapse: collapse; table-layout: fixed; width: 812px; font-size: 13px; }
.c0 { width: 31px; } .c1 { width: 234px; } .c2 { width: 250px; } .c3 { width: 117px; } .c4 { width: 180px; }
th, td { padding: 0; border-right: 1px solid #666; border-bottom: 1px solid #666; text-align: left; background: #e8e8e8; line-height: 18px; }
th { height: 33px; padding-left: 2px; border-color: #000; background: #f0f0f0; font-size: 12px; }
td { height: 19px; }
.sec td { height: 25px; font-weight: bold; }
td:first-child { background: #f0f0f0; border-color: #000; }
td.open { background: #fff; padding-left: 32px; }
td.edit { padding-left: 1px; }
td.hint { font-style: italic; font-size: 14px; color: #999; }
.sec-name { display: flex; align-items: center; height: 24px; padding: 4px 0 0 2px; }
.fold-btn { width: 20px; height: 19px; margin-top: -2px; border: 2px solid #999; border-left-width: 1px; background: linear-gradient(#3f5fa8, #3f5fa8) center / 12px 2px no-repeat, #fdfdfd; }
.cell { display: flex; justify-content: space-between; height: 18px; padding-left: 4px; border-left: 1px solid #000; }
.cell svg { background: #f0f0f0; }
.dlg-buttons { display: flex; flex-direction: column; gap: 10px; padding-top: 2px; }
.dlg-buttons button { width: 89px; height: 30px; border: 1px solid #ccc; border-bottom-color: #bbb; border-radius: 4px; background: #fdfdfd; }
.dlg-buttons .default { border-color: #0067c0; }
.dlg-opts { display: flex; align-items: center; height: 41px; padding-left: 4px; }
.check { display: flex; align-items: center; gap: 3px; }
.check input { appearance: none; flex: none; width: 16px; height: 16px; margin: 0; border: 1px solid #666; border-radius: 3px; background: #f6f6f6; display: grid; place-items: center; }
.check input:checked { background: #0a5fb8; border-color: #0a5fb8; }
.check input:checked::after { content: ""; width: 8px; height: 4px; margin-bottom: 2px; border: solid #fff; border-width: 0 0 1px 1px; transform: rotate(-45deg); }
.rebuild { width: 152px; padding-top: 4px; }
.light { width: 30px; height: 30px; display: grid; place-items: center; border: 1px solid #888; background: #f5f5f5; }
.light svg { width: 12px; height: 20px; margin-bottom: 2px; }
.units { width: 151px; margin-left: 31px; }
.picker { display: grid; align-items: center; padding-top: 3px; }
.picker select { grid-area: 1 / 1; appearance: none; width: 79px; height: 25px; padding: 0 3px; border: 1px solid #ccc; border-radius: 3px; background: #fdfdfd; }
.picker svg { grid-area: 1 / 1; justify-self: end; margin-right: 5px; pointer-events: none; }
.solve { margin-left: 61px; }
.link { padding: 4px 4px 17px; }
.grip { position: absolute; right: 1px; bottom: 1px; }

/* status bar */
.status { flex: none; height: 19px; display: flex; gap: 20px; overflow: hidden; font-size: 14px; line-height: 24px; white-space: nowrap; background: #e6e6e6; border-top: 1px solid #777; }
.edition { flex: 1; padding-left: 1px; }
.coord + .coord { padding-left: 1px; }
.state { padding-right: 6px; border-right: 1px solid #ccc; }
.editing { width: 127px; margin-left: -13px; padding-left: 5px; border: 1px solid #ccc; border-width: 0 1px; margin-right: 10px; }
.status svg { margin-top: 4px; }
.ips { width: 140px; padding-left: 31px; color: #aaa; display: flex; align-items: center; gap: 36px; padding-top: 6px; }
.ips i { border: 3px solid transparent; border-bottom: 4px solid #888; border-top: 0; }
```
